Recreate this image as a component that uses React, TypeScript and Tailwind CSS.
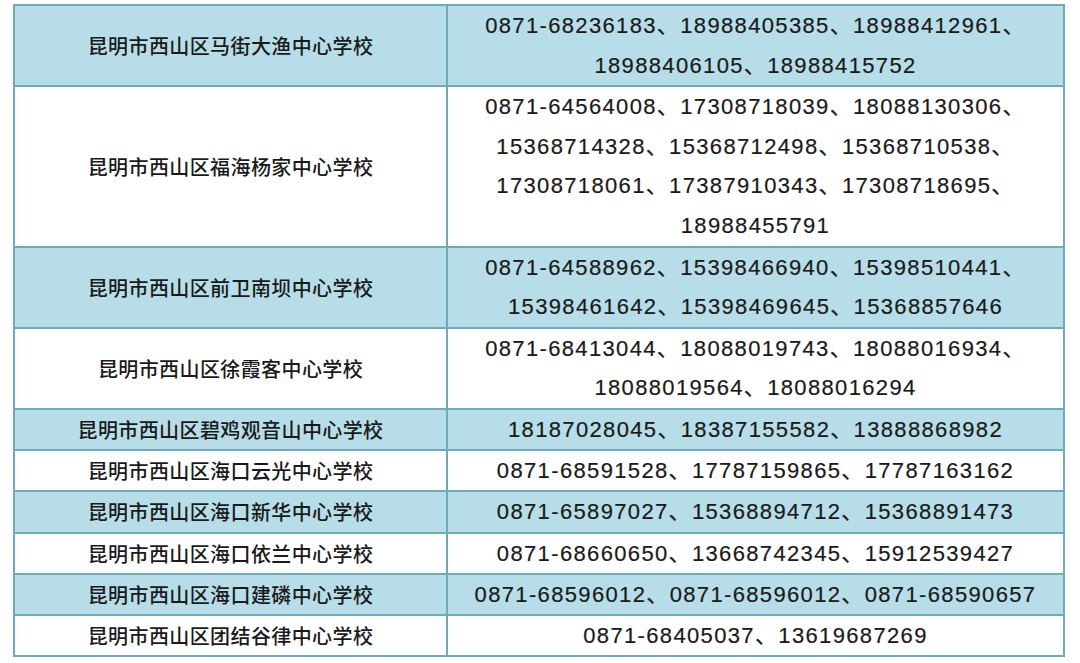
type School = {
  name: string;
  phones: string[];
};

const schools: School[] = [
  {
    name: "昆明市西山区马街大渔中心学校",
    phones: ["0871-68236183、18988405385、18988412961、", "18988406105、18988415752"],
  },
  {
    name: "昆明市西山区福海杨家中心学校",
    phones: [
      "0871-64564008、17308718039、18088130306、",
      "15368714328、15368712498、15368710538、",
      "17308718061、17387910343、17308718695、",
      "18988455791",
    ],
  },
  {
    name: "昆明市西山区前卫南坝中心学校",
    phones: ["0871-64588962、15398466940、15398510441、", "15398461642、15398469645、15368857646"],
  },
  {
    name: "昆明市西山区徐霞客中心学校",
    phones: ["0871-68413044、18088019743、18088016934、", "18088019564、18088016294"],
  },
  {
    name: "昆明市西山区碧鸡观音山中心学校",
    phones: ["18187028045、18387155582、13888868982"],
  },
  {
    name: "昆明市西山区海口云光中心学校",
    phones: ["0871-68591528、17787159865、17787163162"],
  },
  {
    name: "昆明市西山区海口新华中心学校",
    phones: ["0871-65897027、15368894712、15368891473"],
  },
  {
    name: "昆明市西山区海口依兰中心学校",
    phones: ["0871-68660650、13668742345、15912539427"],
  },
  {
    name: "昆明市西山区海口建磷中心学校",
    phones: ["0871-68596012、0871-68596012、0871-68590657"],
  },
  {
    name: "昆明市西山区团结谷律中心学校",
    phones: ["0871-68405037、13619687269"],
  },
];

export default function App() {
  return (
    <div className="w-[1080px] h-[663px] bg-white pt-[4px] pl-[13px] overflow-hidden">
      <div className="w-[1052px] border-2 border-[#6fa9bd] text-[#1a1a1a]">
        {schools.map((s, i) => (
          <div
            key={s.name}
            className={
              "flex " +
              (i > 0 ? "border-t-2 border-[#6fa9bd] " : "") +
              (i % 2 === 0 ? "bg-[#b7dde8]" : "bg-white")
            }
          >
            <div className="w-[433px] shrink-0 border-r-2 border-[#6fa9bd] flex items-center justify-center font-['Noto_Sans_CJK_SC',sans-serif] text-[20px] font-medium tracking-[0.4px] leading-[39px]">
              {s.name}
            </div>
            <div
              className={
                "flex-1 flex flex-col items-center justify-center font-['Liberation_Sans','Noto_Sans_CJK_SC',sans-serif] text-[22px] tracking-[1.35px] [-webkit-text-stroke:0.2px_#1a1a1a] " +
                (s.phones.length > 1 ? "leading-[39.6px]" : "leading-[39.2px]")
              }
            >
              {s.phones.map((p) => (
                <div key={p} className="whitespace-nowrap">
                  {p}
                </div>
              ))}
            </div>
          </div>
        ))}
      </div>
    </div>
  );
}
